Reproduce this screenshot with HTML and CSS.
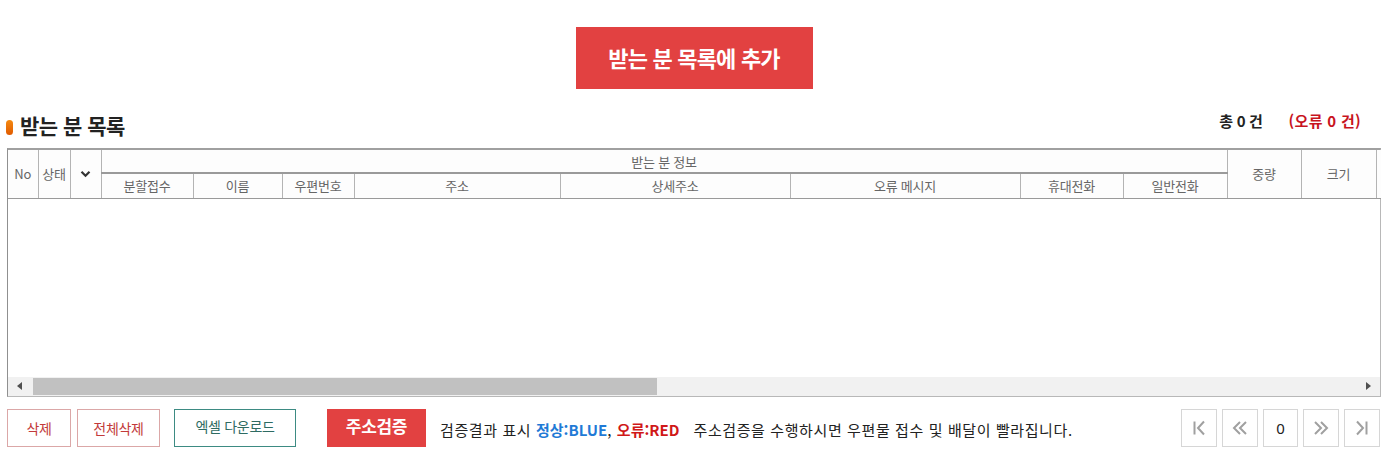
FILE: index.html
```html
<!DOCTYPE html>
<html lang="ko">
<head>
<meta charset="utf-8">
<link rel="stylesheet" href="styles.css">
</head>
<body>
<div class="page">
  <div class="add-wrap">
    <button class="btn-add">받는 분 목록에 추가</button>
  </div>
  <div class="title-row">
    <h2 class="title"><span class="dot"></span>받는 분 목록</h2>
    <div class="counts"><span class="total">총 0 건</span><span class="err">(오류 0 건)</span></div>
  </div>
  <div class="grid">
    <table class="head">
      <colgroup>
        <col class="c30"><col class="c32"><col class="c31"><col class="c92"><col class="c89"><col class="c72"><col class="c206"><col class="c230"><col class="c230"><col class="c103"><col class="c104"><col class="c74"><col class="c75"><col class="c6">
      </colgroup>
      <tr class="r1">
        <th rowspan="2">No</th>
        <th rowspan="2">상태</th>
        <th rowspan="2"><svg class="chk" width="11" height="8" viewBox="0 0 11 8"><path d="M1.5 1.8 L5.5 5.8 L9.5 1.8" fill="none" stroke="#333" stroke-width="2.2"/></svg></th>
        <th colspan="8" class="group">받는 분 정보</th>
        <th rowspan="2">중량</th>
        <th rowspan="2">크기</th>
        <th rowspan="2" class="gut"></th>
      </tr>
      <tr class="r2">
        <th>분할접수</th>
        <th>이름</th>
        <th>우편번호</th>
        <th>주소</th>
        <th>상세주소</th>
        <th>오류 메시지</th>
        <th>휴대전화</th>
        <th>일반전화</th>
      </tr>
    </table>
    <div class="body"></div>
    <div class="hscroll">
      <div class="sb-btn"><span class="tri-l"></span></div>
      <div class="sb-track"><div class="sb-thumb"></div></div>
      <div class="sb-btn"><span class="tri-r"></span></div>
    </div>
  </div>
  <div class="bottom">
    <div class="left">
      <button class="btn btn-del">삭제</button>
      <button class="btn btn-del btn-all">전체삭제</button>
      <button class="btn btn-xls">엑셀 다운로드</button>
      <button class="btn-verify">주소검증</button>
      <p class="note">검증결과 표시 <b class="blue">정상:BLUE</b>, <b class="red">오류:RED</b><span class="sp"></span>주소검증을 수행하시면 우편물 접수 및 배달이 빨라집니다.</p>
    </div>
    <div class="pager">
      <button class="pg"><svg width="18" height="18" viewBox="0 0 18 18"><path d="M4.5 2.5 V15.5" stroke="#a0a0a0" stroke-width="2" fill="none"/><path d="M14 2.5 L8 9 L14 15.5" stroke="#a0a0a0" stroke-width="2" fill="none"/></svg></button>
      <button class="pg"><svg width="22" height="18" viewBox="0 0 22 18"><path d="M11 3 L5 9 L11 15 M17 3 L11 9 L17 15" stroke="#a0a0a0" stroke-width="2" fill="none"/></svg></button>
      <span class="pg num">0</span>
      <button class="pg"><svg width="22" height="18" viewBox="0 0 22 18"><path d="M5 3 L11 9 L5 15 M11 3 L17 9 L11 15" stroke="#a0a0a0" stroke-width="2" fill="none"/></svg></button>
      <button class="pg"><svg width="18" height="18" viewBox="0 0 18 18"><path d="M4 2.5 L10 9 L4 15.5" stroke="#a0a0a0" stroke-width="2" fill="none"/><path d="M13.5 2.5 V15.5" stroke="#a0a0a0" stroke-width="2" fill="none"/></svg></button>
    </div>
  </div>
</div>
</body>
</html>
```

FILE: styles.css
```css
* { box-sizing: border-box; }
html, body { margin: 0; padding: 0; background: #fff; }
body {
  font-family: "Noto Sans CJK KR", "Noto Sans", sans-serif;
  color: #333;
}
.page { padding: 0 7px; }

.add-wrap { display: flex; justify-content: center; padding-top: 27px; }
.btn-add {
  width: 237px; height: 62px;
  background: #e24141; color: #fff; border: 0;
  font-family: inherit; font-size: 22px; font-weight: 700;
  letter-spacing: -0.8px; padding-bottom: 3px;
}

.title-row {
  display: flex; justify-content: space-between; align-items: center;
  margin-top: 22px; height: 28px; margin-bottom: 9px;
}
.title {
  margin: 0; display: flex; align-items: center;
  font-size: 21px; font-weight: 700; color: #222; letter-spacing: -0.5px;
  margin-left: -1px;
}
.dot {
  display: inline-block; width: 7px; height: 15px; border-radius: 4px;
  background: linear-gradient(#f58a10, #e05a00);
  margin-right: 7px; margin-top: 4px;
}
.counts { font-size: 15px; font-weight: 700; display: flex; gap: 20px; margin-right: 20px; margin-top: -10px; letter-spacing: -0.3px; }
.total { color: #222; margin-right: 6px; }
.err { color: #c8141e; letter-spacing: 0.3px; }

.grid {
  border: 1px solid #b8b8b8;
  border-top: 2px solid #a0a0a0;
  border-left: 1px solid #909090;
}
.head {
  width: 100%; table-layout: fixed; border-collapse: collapse;
}
.c30 { width: 30px; } .c32 { width: 32px; } .c31 { width: 31px; }
.c92 { width: 92px; } .c89 { width: 89px; } .c72 { width: 72px; }
.c206 { width: 206px; } .c230 { width: 230px; } .c103 { width: 103px; }
.c104 { width: 104px; } .c74 { width: 74px; } .c75 { width: 75px; } .c6 { width: 5px; }
.head th {
  font-weight: 400; font-size: 13px; color: #666;
  border: 1px solid #b4b4b4; padding: 0; background: #fdfdfd;
  white-space: nowrap; overflow: hidden; letter-spacing: -0.2px;
}
.head tr:first-child th { border-top: 0; }
.head th:first-child { border-left: 0; }
.head .gut { border-right: 0; }
.r1 { height: 23px; }
.r2 { height: 25px; }
.head .group { border-bottom: 2px solid #9a9a9a; }
.head tr:last-child th, .head th[rowspan] { border-bottom: 1px solid #9a9a9a; }
.chk { display: block; margin: 0 auto; }

.body { height: 178px; background: #fff; }

.hscroll { display: flex; height: 19px; background: #f1f1f1; }
.sb-btn { width: 25px; display: flex; align-items: center; justify-content: center; }
.sb-track { flex: 1; display: flex; align-items: stretch; padding: 1px 0; }
.sb-thumb { width: 624px; background: #c1c1c1; }
.tri-l, .tri-r { width: 0; height: 0; border-top: 4px solid transparent; border-bottom: 4px solid transparent; }
.tri-l { border-right: 5px solid #505050; margin-left: -2px; }
.tri-r { border-left: 5px solid #505050; margin-left: 2px; }

.bottom {
  display: flex; justify-content: space-between; align-items: center;
  margin-top: 12px; height: 38px;
}
.left { display: flex; align-items: center; height: 38px; }
.btn {
  height: 38px; background: #fff; font-family: inherit; font-size: 14px;
  padding: 0; margin-right: 6px; letter-spacing: -0.3px;
}
.btn-del { width: 64px; border: 1px solid #dba7a7; color: #c23a3a; }
.btn-all { width: 83px; margin-right: 14px; }
.btn-xls { width: 122px; border: 1px solid #3d8b83; color: #2e6b62; margin-right: 31px; padding-bottom: 4px; }
.btn-verify {
  width: 99px; height: 38px; background: #e24141; color: #fff; border: 0;
  font-family: inherit; font-size: 17px; font-weight: 700; padding-bottom: 6px; letter-spacing: -0.3px;
}
.note { margin: 0 0 0 14px; font-size: 15px; color: #222; letter-spacing: 0.6px; padding-top: 4px; }
.note b { font-weight: 700; letter-spacing: 0; }
.blue { color: #1f7ad6; }
.red { color: #d01818; }
.sp { display: inline-block; width: 14px; }

.pager { display: flex; gap: 5px; margin-right: 1px; }
.pg {
  width: 36px; height: 38px; background: #fff; border: 1px solid #d6d6d6;
  display: flex; align-items: center; justify-content: center; padding: 0;
  font-family: "Noto Sans", sans-serif; font-size: 15px; color: #222;
}
.num { width: 35px; }
```
